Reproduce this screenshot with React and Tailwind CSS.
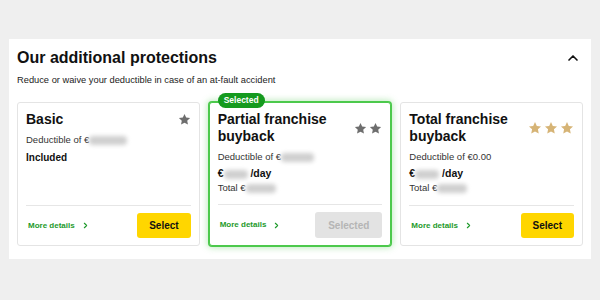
import { ChevronUp, ChevronRight } from 'lucide-react'

const CARDS = [
  { id: 'basic', title: 'Basic', stars: 1, deductible: null, included: true },
  { id: 'partial', title: 'Partial franchise buyback', stars: 2, deductible: null, selected: true },
  { id: 'total', title: 'Total franchise buyback', stars: 3, deductible: '0.00' },
]

function Star({ className }) {
  return (
    <svg viewBox="0 0 24 24" className={className} fill="currentColor">
      <path d="M12 1.8l3.1 6.6 7.2.9-5.3 5 1.4 7.1L12 17.9l-6.4 3.5 1.4-7.1-5.3-5 7.2-.9z" />
    </svg>
  )
}

function Blur({ w }) {
  return <span className={`inline-block h-[9px] ${w} rounded-sm bg-[#cfcfcf] blur-[2px] align-middle`} />
}

function Card({ card }) {
  const { title, stars, deductible, included, selected } = card
  const starColor = stars === 3 ? 'text-[#d6b476]' : 'text-[#6e6e6e]'
  const starSize = stars === 3 ? 'w-[14px] h-[14px]' : 'w-[13px] h-[13px]'

  return (
    <div
      className={`relative flex flex-col bg-white rounded-[3px] px-2 pt-2 pb-[7px] min-h-[144px] ${
        selected
          ? 'border border-[#4cc94c] ring-1 ring-[#4cc94c] shadow-[0_0_6px_2px_rgba(76,201,76,0.35)]'
          : 'border border-[#e4e4e4]'
      }`}
    >
      {selected && (
        <span className="absolute -top-[10px] left-[8px] h-[15px] px-[6px] rounded-full bg-[#159a1f] text-white text-[8.5px] font-bold leading-[15px]">
          Selected
        </span>
      )}

      {/* Title + stars */}
      <div className="flex items-center justify-between gap-2">
        <h3 className="text-[14px] leading-[17px] font-bold text-[#111] max-w-[135px]">{title}</h3>
        <div className={`flex items-center gap-[2px] ${starColor}`}>
          {Array.from({ length: stars }).map((_, i) => (
            <Star key={i} className={starSize} />
          ))}
        </div>
      </div>

      <p className="mt-[6px] text-[9.5px] leading-[12px] text-[#333]">
        Deductible of €{deductible ?? <Blur w={stars === 1 ? 'w-[38px]' : 'w-[33px]'} />}
      </p>

      {included ? (
        <p className="mt-[6px] text-[10px] leading-[12px] font-bold text-[#111]">Included</p>
      ) : (
        <>
          <p className="mt-[4px] text-[10.5px] leading-[13px] font-bold text-[#111]">
            €<Blur w="w-[24px]" /> /day
          </p>
          <p className="mt-[2px] text-[9.5px] leading-[12px] text-[#333]">
            Total €<Blur w="w-[30px]" />
          </p>
        </>
      )}

      {/* Footer */}
      <div className="mt-auto border-t border-[#e6e6e6] pt-[7px] flex items-center justify-between">
        <button className="flex items-center gap-[6px] pl-[2px] text-[8px] font-bold text-[#1e9a2b]">
          More details
          <ChevronRight size={9} strokeWidth={3} />
        </button>
        {selected ? (
          <button className="h-[26px] px-[13px] rounded-[3px] bg-[#e3e3e3] text-[10px] font-bold text-[#b5b5b5]">
            Selected
          </button>
        ) : (
          <button className="h-[25px] px-[12px] rounded-[3px] bg-[#ffd600] text-[10px] font-bold text-[#111]">
            Select
          </button>
        )}
      </div>
    </div>
  )
}

export default function App() {
  return (
    <div className="w-[600px] h-[300px] bg-[#efefef] pt-[39px] px-[9px] font-['Liberation_Sans',Arial,sans-serif]">
      <div className="bg-white px-2 pt-[9px] pb-[13px]">
        {/* Header */}
        <div className="flex items-center justify-between">
          <h2 className="text-[16px] leading-[20px] font-bold text-[#111]">Our additional protections</h2>
          <ChevronUp size={16} strokeWidth={2.5} className="mr-[2px] text-[#111]" />
        </div>
        <p className="mt-[6px] text-[9.3px] leading-[12px] text-[#222]">
          Reduce or waive your deductible in case of an at-fault accident
        </p>

        <div className="mt-[16px] grid grid-cols-3 gap-[9px]">
          {CARDS.map(c => (
            <Card key={c.id} card={c} />
          ))}
        </div>
      </div>
    </div>
  )
}
